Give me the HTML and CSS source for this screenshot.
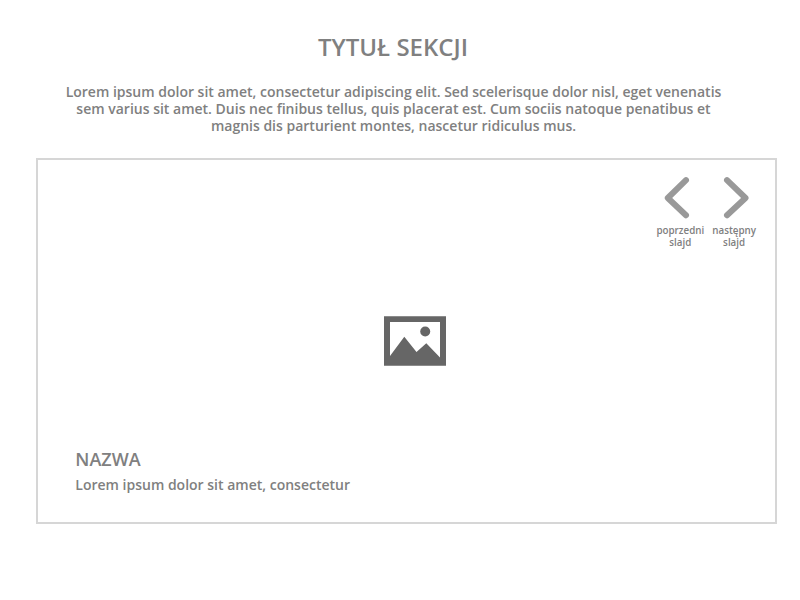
FILE: index.html
```html
<!DOCTYPE html>
<html lang="pl">
<head>
<meta charset="utf-8">
<title>Tytuł sekcji</title>
<link rel="stylesheet" href="styles.css">
</head>
<body>
<section class="section">
  <h1 class="title">TYTUŁ SEKCJI</h1>
  <p class="lead">Lorem ipsum dolor sit amet, consectetur adipiscing elit. Sed scelerisque dolor nisl, eget venenatis<br>sem varius sit amet. Duis nec finibus tellus, quis placerat est. Cum sociis natoque penatibus et<br>magnis dis parturient montes, nascetur ridiculus mus.</p>
  <div class="slide">
    <nav class="controls">
      <div class="control prev"><svg class="arrow" width="34" height="44" viewBox="0 0 34 44"><path d="M23 4.200L4.800 22L23 39.200"/></svg><span>poprzedni<br>slajd</span></div>
      <div class="control next"><svg class="arrow" width="34" height="44" viewBox="0 0 34 44"><path d="M10 4.200L28.500 22L10 39.200"/></svg><span>następny<br>slajd</span></div>
    </nav>
    <svg class="picture" width="62" height="50" viewBox="0 0 62 50"><path fill-rule="evenodd" d="M0 .3H62V49.700H0ZM6 6V40L20.300 20.800L32.500 36L42.300 27.300L56 41.500V6Z"/><circle cx="41.200" cy="15.500" r="5"/></svg>
    <div class="caption">
      <h2 class="name">NAZWA</h2>
      <p class="text">Lorem ipsum dolor sit amet, consectetur</p>
    </div>
  </div>
</section>
</body>
</html>
```
FILE: styles.css
```css
* { box-sizing: border-box; margin: 0; padding: 0; }
body { background: #fff; color: #808080; font-family: "Open Sans", sans-serif; font-weight: 600; }
.section { width: 800px; height: 600px; display: flex; flex-direction: column; padding: 30px 23px 0 36px; }
.title { width: 714px; font-size: 24px; line-height: 34px; font-weight: 600; text-align: center; }
.lead { width: 715px; margin-top: 19px; font-size: 14px; line-height: 17px; text-align: center; white-space: nowrap; }
.slide { width: 741px; height: 366px; margin-top: 24px; border: 2px solid #d6d6d6; display: flex; flex-direction: column; }
.controls { display: flex; justify-content: flex-end; gap: 8px; height: 91px; padding: 16px 19px 0 0; }
.control { display: flex; flex-direction: column; align-items: center; font-size: 9.8px; line-height: 12px; text-align: center; }
.control span { margin-top: 5px; }
.arrow { fill: none; stroke: #999; stroke-width: 6; stroke-linecap: round; stroke-linejoin: round; }
.picture { margin: 65px 0 0 346px; fill: #666; flex: none; }
.caption { margin: 81px 0 0 37.3px; }
.name { font-size: 18px; line-height: 25px; font-weight: 600; }
.text { font-size: 14px; line-height: 19px; margin-top: 3px; }
```
